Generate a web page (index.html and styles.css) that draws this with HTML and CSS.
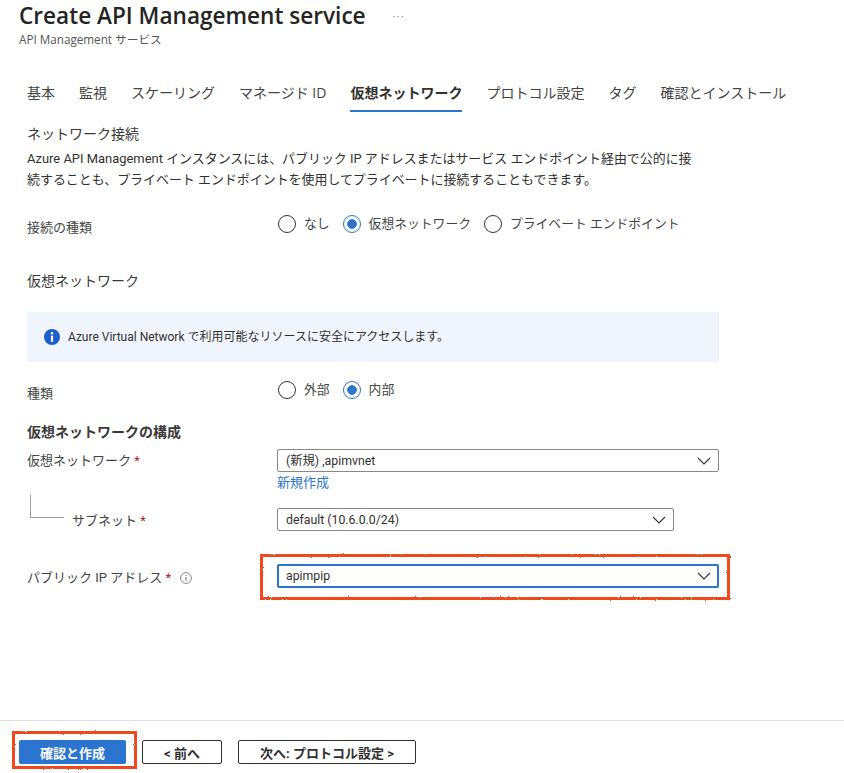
FILE: index.html
```html
<!DOCTYPE html>
<html lang="ja">
<head>
  <meta charset="utf-8">
  <title>Create API Management service</title>
  <link rel="stylesheet" href="styles.css">
</head>
<body>
  <svg class="defs" width="0" height="0">
    <filter id="rough">
      <feTurbulence type="fractalNoise" baseFrequency="0.6" numOctaves="2" seed="4"/>
      <feDisplacementMap in="SourceGraphic" scale="2"/>
    </filter>
  </svg>
  <div class="page">
    <header class="blade-header">
      <div class="title-row">
        <h1>Create API Management service</h1>
        <span class="more">···</span>
      </div>
      <div class="subtitle">API Management サービス</div>
    </header>

    <nav class="tabs">
      <a>基本</a>
      <a>監視</a>
      <a>スケーリング</a>
      <a>マネージド ID</a>
      <a class="active">仮想ネットワーク</a>
      <a>プロトコル設定</a>
      <a>タグ</a>
      <a>確認とインストール</a>
    </nav>

    <main class="content">
      <h2 class="section-title">ネットワーク接続</h2>
      <p class="intro">Azure API Management インスタンスには、パブリック IP アドレスまたはサービス エンドポイント経由で公的に接続することも、プライベート エンドポイントを使用してプライベートに接続することもできます。</p>

      <div class="field radio-field conn-field">
        <div class="label">接続の種類</div>
        <div class="radios">
          <span class="radio"></span><span class="radio-text">なし</span>
          <span class="radio on"></span><span class="radio-text">仮想ネットワーク</span>
          <span class="radio"></span><span class="radio-text">プライベート エンドポイント</span>
        </div>
      </div>

      <h2 class="section-title vnet-title">仮想ネットワーク</h2>

      <div class="info-box">
        <svg class="info-icon" width="16" height="16" viewBox="0 0 16 16">
          <circle cx="8" cy="8" r="8" fill="#1b5fd0"/>
          <circle cx="8" cy="4.2" r="1.2" fill="#fff"/>
          <rect x="6.9" y="6.6" width="2.2" height="6.2" fill="#fff"/>
        </svg>
        <span>Azure Virtual Network で利用可能なリソースに安全にアクセスします。</span>
      </div>

      <div class="field radio-field type-field">
        <div class="label">種類</div>
        <div class="radios">
          <span class="radio"></span><span class="radio-text">外部</span>
          <span class="radio on"></span><span class="radio-text">内部</span>
        </div>
      </div>

      <h3 class="config-title">仮想ネットワークの構成</h3>

      <div class="field vnet-field">
        <div class="label">仮想ネットワーク <span class="req">*</span></div>
        <div class="control">
          <div class="select">
            <span>(新規) ,apimvnet</span>
            <svg class="chevron" width="14" height="8" viewBox="0 0 14 8"><path d="M1 1l6 6 6-6" fill="none" stroke="#333" stroke-width="1.1"/></svg>
          </div>
          <a class="link">新規作成</a>
        </div>
      </div>

      <div class="field subnet-field">
        <div class="label subnet-label">
          <span class="tree"></span>
          <span>サブネット <span class="req">*</span></span>
        </div>
        <div class="control">
          <div class="select short">
            <span>default (10.6.0.0/24)</span>
            <svg class="chevron" width="14" height="8" viewBox="0 0 14 8"><path d="M1 1l6 6 6-6" fill="none" stroke="#333" stroke-width="1.1"/></svg>
          </div>
        </div>
      </div>

      <div class="field ip-field">
        <div class="label">
          パブリック IP アドレス <span class="req">*</span>
          <svg class="hint" width="12" height="12" viewBox="0 0 12 12">
            <circle cx="6" cy="6" r="5.4" fill="none" stroke="#777" stroke-width="0.9"/>
            <rect x="5.5" y="5" width="1" height="3.8" fill="#666"/>
            <rect x="5.5" y="3" width="1" height="1" fill="#666"/>
          </svg>
        </div>
        <div class="control">
          <div class="select focused callout">
            <span>apimpip</span>
            <svg class="chevron" width="14" height="8" viewBox="0 0 14 8"><path d="M1 1l6 6 6-6" fill="none" stroke="#333" stroke-width="1.1"/></svg>
          </div>
        </div>
      </div>
    </main>

    <footer class="footer">
      <button class="btn primary callout-btn">確認と作成</button>
      <button class="btn prev">&lt; 前へ</button>
      <button class="btn next">次へ: プロトコル設定 &gt;</button>
    </footer>
  </div>
</body>
</html>
```

FILE: styles.css
```css
*, *::after {
  box-sizing: border-box;
}
html, body {
  margin: 0;
  height: 100%;
  overflow: hidden;
}
body {
  background: #fff;
  color: #323130;
  font-family: Roboto, "Noto Sans CJK JP", sans-serif;
  font-size: 13px;
  line-height: 18px;
}
.defs {
  display: block;
  height: 0;
}
.page {
  height: 773px;
  display: flex;
  flex-direction: column;
}

/* header */
.blade-header {
  padding-left: 19px;
  height: 68px;
  font-family: "Open Sans", "Noto Sans CJK JP", sans-serif;
}
.title-row {
  display: flex;
  align-items: center;
  height: 32px;
}
h1 {
  margin: 0;
  font-size: 22.6px;
  line-height: 32px;
  font-weight: 600;
  color: #252423;
}
.more {
  margin-left: 27px;
  font-size: 10px;
  letter-spacing: 1.5px;
  color: #8a8886;
}
.subtitle {
  margin-top: -1px;
  font-size: 11.7px;
  line-height: 16px;
  color: #555;
}

/* tabs */
.tabs {
  display: flex;
  gap: 24px;
  margin-left: 27px;
  height: 44px;
  font-family: "Open Sans", "Noto Sans CJK JP", sans-serif;
}
.tabs a {
  height: 44px;
  padding-top: 14px;
  font-size: 14px;
  line-height: 22px;
  color: #444;
}
.tabs a.active {
  font-weight: 700;
  color: #323130;
  border-bottom: 2px solid #2b74d0;
}

/* form */
.content {
  flex: 1;
  padding-left: 27px;
}
.section-title {
  margin: 0;
  font-size: 14px;
  line-height: 20px;
  font-weight: 400;
  color: #3b3a39;
}
.content > .section-title:first-child {
  margin-top: 12px;
}
.intro {
  width: 670px;
  margin: 4px 0 0;
  line-height: 21px;
  font-size: 12.95px;
}
.field {
  display: flex;
}
.label {
  width: 250px;
  flex: none;
  color: #444;
}
.control {
  flex: 1;
}
.radios {
  display: flex;
  align-items: center;
  height: 20px;
}
.radio {
  width: 18px;
  height: 18px;
  margin-left: 1px;
  border: 1px solid #333;
  border-radius: 50%;
  flex: none;
}
.radio.on {
  border-color: #2b74d0;
  background: radial-gradient(circle, #2b74d0 0 4.5px, #fff 5px);
}
.radio-text {
  margin: 0 12px 0 8px;
  font-size: 12.8px;
  color: #444;
}
.conn-field {
  margin-top: 24px;
}
.conn-field .label, .type-field .label {
  padding-top: 5px;
}
.vnet-title {
  margin-top: 34px;
}
.info-box {
  display: flex;
  align-items: center;
  gap: 8px;
  width: 692px;
  height: 50px;
  margin-top: 21px;
  padding-left: 17px;
  background: #f0f5fd;
  font-size: 12px;
  color: #323130;
}
.type-field {
  margin-top: 18px;
}
.config-title {
  margin: 20px 0 0;
  font-size: 14px;
  line-height: 18px;
  font-weight: 700;
  color: #3b3a39;
}
.vnet-field {
  margin-top: 8px;
}
.vnet-field .label {
  padding-top: 3px;
}
.req {
  color: #a4262c;
}
.select {
  display: flex;
  align-items: center;
  justify-content: space-between;
  width: 442px;
  height: 23px;
  padding: 0 7px 0 8px;
  border: 1px solid #8a8886;
  border-radius: 2px;
  font-size: 12.3px;
  color: #323130;
}
.select.short {
  width: 397px;
}
.select.focused {
  border: 2px solid #2b74d0;
  height: 24px;
  padding: 0 6px 0 7px;
}
.chevron {
  flex: none;
}
.link {
  display: block;
  margin-top: 2px;
  color: #2b74d0;
}
.subnet-field {
  margin-top: 16px;
}
.subnet-label {
  position: relative;
  padding: 4px 0 0 45px;
}
.tree {
  position: absolute;
  left: 3px;
  top: -13px;
  width: 34px;
  height: 23px;
  border-left: 1px solid #a0a0a0;
  border-bottom: 1px solid #a0a0a0;
}
.ip-field {
  margin-top: 33px;
}
.ip-field .label {
  padding-top: 5px;
}
.hint {
  margin-left: 6px;
  vertical-align: -2px;
}

/* red annotation boxes drawn over the screenshot */
.callout, .callout-btn {
  position: relative;
}
.callout::after, .callout-btn::after {
  content: "";
  position: absolute;
  border: 3px solid #f0461e;
  filter: url(#rough);
}
.callout::after {
  left: -19px;
  top: -12px;
  width: 470px;
  height: 46px;
}
.callout-btn::after {
  left: -7px;
  top: -9px;
  width: 125px;
  height: 38px;
}

/* footer */
.footer {
  display: flex;
  height: 53px;
  padding: 19px 0 0 19px;
  border-top: 1px solid #e1dfdd;
}
.btn {
  height: 24px;
  padding: 0;
  border: 1px solid #323130;
  border-radius: 2px;
  background: #fff;
  color: #323130;
  font-family: inherit;
  font-size: 13px;
  font-weight: 700;
}
.btn.primary {
  width: 107px;
  border: 0;
  background: #2b74d0;
  color: #fff;
}
.btn.prev {
  width: 80px;
  margin-left: 16px;
}
.btn.next {
  width: 178px;
  margin-left: 16px;
}
```
